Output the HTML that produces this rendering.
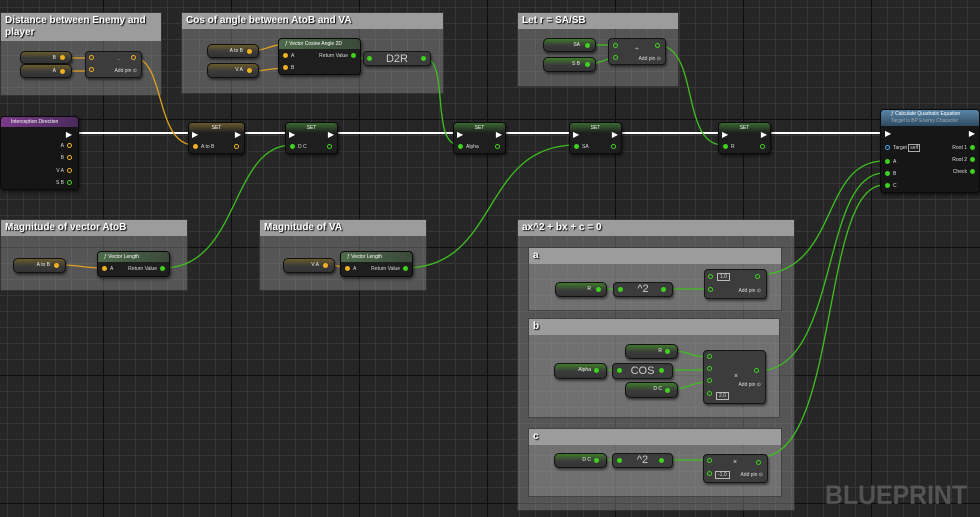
<!DOCTYPE html>
<html><head><meta charset="utf-8"><style>
*{margin:0;padding:0;box-sizing:border-box}
body{width:980px;height:517px;overflow:hidden;position:relative;font-family:"Liberation Sans",sans-serif;
background-color:#262626;
background-image:linear-gradient(#0e0e0e 1px,transparent 1px),linear-gradient(90deg,#0e0e0e 1px,transparent 1px),linear-gradient(#363636 1px,transparent 1px),linear-gradient(90deg,#363636 1px,transparent 1px);
background-size:128px 128px,128px 128px,16px 16px,16px 16px;background-position:-25px -9px,-25px -9px,-25px -9px,-25px -9px}
.c{position:absolute;background:rgba(150,150,150,.42);border:1px solid rgba(0,0,0,.4)}
.c>.t{background:#9c9c9c;color:#fff;font-size:10px;font-weight:bold;padding:2px 4px;line-height:12px;text-shadow:1px 1px 1px #000}
.n{position:absolute;background:#1e1e1e;border:1px solid #0a0a0a;border-radius:4px;box-shadow:1px 2px 3px rgba(0,0,0,.6);color:#ddd;font-size:5px}
.g{position:absolute;border-radius:5px;border:1px solid #111;box-shadow:1px 2px 2px rgba(0,0,0,.5);font-size:5px;color:#eee;text-align:right;padding-right:15px;line-height:12px}
.gy{background:linear-gradient(#6a5a2a,#3a3a3a 55%,#333)}
.gg{background:linear-gradient(#3f7a2a,#3a3a3a 55%,#333)}
.m{position:absolute;background:#3c3c3c;border:1px solid #151515;border-radius:4px;box-shadow:1px 2px 2px rgba(0,0,0,.5);color:#ddd;font-size:5px}
.d{position:absolute;width:5px;height:5px;border-radius:50%}
.y{background:#f0b020}.gr{background:#3fd020}
.o{border:1px solid #3fd020;background:transparent}.oy{border:1px solid #f0b020;background:transparent}
.h{position:absolute;left:0;right:0;top:0;height:10px;border-radius:3px 3px 0 0;font-size:5px;color:#fff;text-align:center;line-height:10px}
.big{position:absolute;font-size:11px;color:#ccc;text-align:center}
</style></head><body>

<div class="c" style="left:0;top:12px;width:162px;height:84px"><div class="t" style="height:28px">Distance between Enemy and player</div></div>
<div class="c" style="left:181px;top:12px;width:263px;height:82px"><div class="t">Cos of angle between AtoB and VA</div></div>
<div class="c" style="left:517px;top:12px;width:162px;height:75px"><div class="t">Let r = SA/SB</div></div>
<div class="c" style="left:0;top:219px;width:188px;height:72px"><div class="t">Magnitude of vector AtoB</div></div>
<div class="c" style="left:259px;top:219px;width:168px;height:72px"><div class="t">Magnitude of VA</div></div>
<div class="c" style="left:517px;top:219px;width:278px;height:292px"><div class="t">ax^2 + bx + c = 0</div></div>
<div class="c" style="left:528px;top:247px;width:254px;height:64px"><div class="t">a</div></div>
<div class="c" style="left:528px;top:318px;width:252px;height:100px"><div class="t">b</div></div>
<div class="c" style="left:528px;top:428px;width:254px;height:69px"><div class="t">c</div></div>

<svg width="980" height="517" style="position:absolute;left:0;top:0" fill="none">
<g stroke="#fff" stroke-width="2"><path d="M79 133H188M244 133H285M337 133H453M505 133H569M621 133H718M770 133H880M976 133H980"/></g>
<g stroke="#e0a020" stroke-width="1.3">
<path d="M62 58H91M62 71H91M134 58C165 58 155 145 194 145M252 51C265 51 270 44 290 44M252 71C265 71 270 68 290 68M60 265C80 265 85 268 102 268M330 265C340 265 340 268 346 268"/></g>
<g stroke="#3fc020" stroke-width="1.3">
<path d="M356 58H369M424 58C450 58 430 145 459 145M590 45H615M590 64C600 64 605 58 615 58M657 45C700 45 680 145 723 145M163 268C240 268 230 145 292 145M405 268C500 268 480 145 576 145M601 289H618M666 289H710M671 351C690 351 690 357 710 357M600 370H618M666 370H710M671 389C690 389 690 382 710 382M600 460H618M666 460H710M760 275C840 270 820 161 884 161M758 371C840 371 820 173 884 173M760 457C840 457 820 185 884 185M976 146H980M976 158H980M976 171H980"/></g>
</svg>

<div class="g gy" style="left:20px;top:51px;width:52px;height:13px">B</div><div class="d y" style="left:60px;top:55px"></div>
<div class="g gy" style="left:20px;top:64px;width:52px;height:14px">A</div><div class="d y" style="left:60px;top:69px"></div>
<div class="m" style="left:85px;top:51px;width:57px;height:27px"><div style="position:absolute;left:32px;top:5px">-</div><div style="position:absolute;right:4px;top:16px">Add pin ⊙</div></div>
<div class="d oy" style="left:89px;top:55px"></div><div class="d oy" style="left:89px;top:67px"></div><div class="d oy" style="left:131px;top:55px"></div>

<div class="g gy" style="left:207px;top:44px;width:52px;height:14px">A to B</div><div class="d y" style="left:247px;top:49px"></div>
<div class="g gy" style="left:207px;top:63px;width:52px;height:15px">V A</div><div class="d y" style="left:247px;top:68px"></div>
<div class="n" style="left:278px;top:38px;width:83px;height:37px"><div class="h" style="background:linear-gradient(90deg,#4d6b4a,#3a4a3a);text-align:left;padding-left:6px">ƒ Vector Cosine Angle 2D</div>
<div class="d y" style="left:4px;top:14px"></div><div style="position:absolute;left:12px;top:14px">A</div>
<div class="d y" style="left:4px;top:26px"></div><div style="position:absolute;left:12px;top:26px">B</div>
<div style="position:absolute;right:12px;top:14px">Return Value</div><div class="d gr" style="right:4px;top:14px"></div></div>
<div class="m" style="left:363px;top:51px;width:68px;height:15px"><div class="big" style="left:0;right:0;top:0;line-height:14px">D2R</div></div>
<div class="d gr" style="left:367px;top:56px"></div><div class="d gr" style="left:421px;top:56px"></div>

<div class="g gg" style="left:543px;top:38px;width:53px;height:14px">SA</div><div class="d gr" style="left:585px;top:43px"></div>
<div class="g gg" style="left:543px;top:57px;width:53px;height:15px">S B</div><div class="d gr" style="left:585px;top:62px"></div>
<div class="m" style="left:608px;top:38px;width:58px;height:27px"><div style="position:absolute;left:26px;top:7px;font-size:7px">÷</div><div style="position:absolute;right:4px;top:17px">Add pin ⊙</div></div>
<div class="d o" style="left:613px;top:43px"></div><div class="d o" style="left:613px;top:55px"></div><div class="d o" style="left:655px;top:43px"></div>

<div class="n" style="left:0px;top:116px;width:79px;height:74px;background:#151515"><div class="h" style="background:linear-gradient(90deg,#7a3a8a,#4a2a5a);text-align:left;padding-left:10px">Interception Direction</div>
<div style="position:absolute;right:6px;top:13px;color:#fff;font-size:8px">▶</div>
<div style="position:absolute;right:14px;top:26px">A</div><div class="d oy" style="right:6px;top:26px"></div>
<div style="position:absolute;right:14px;top:38px">B</div><div class="d oy" style="right:6px;top:38px"></div>
<div style="position:absolute;right:14px;top:51px">V A</div><div class="d oy" style="right:6px;top:51px"></div>
<div style="position:absolute;right:14px;top:63px">S B</div><div class="d o" style="right:6px;top:63px"></div></div>

<div class="n" style="left:188px;top:122px;width:57px;height:32px"><div class="h" style="background:linear-gradient(#6a5a30,#1e1e1e)">SET</div><div style="position:absolute;left:3px;top:7px;color:#fff;font-size:8px">▶</div><div style="position:absolute;right:3px;top:7px;color:#fff;font-size:8px">▶</div><div class="d y" style="left:4px;top:21px"></div><div style="position:absolute;left:12px;top:21px">A to B</div><div class="d oy" style="right:5px;top:21px"></div></div>
<div class="n" style="left:285px;top:122px;width:53px;height:32px"><div class="h" style="background:linear-gradient(#3a6a30,#1e1e1e)">SET</div><div style="position:absolute;left:3px;top:7px;color:#fff;font-size:8px">▶</div><div style="position:absolute;right:3px;top:7px;color:#fff;font-size:8px">▶</div><div class="d gr" style="left:4px;top:21px"></div><div style="position:absolute;left:12px;top:21px">D C</div><div class="d o" style="right:5px;top:21px"></div></div>
<div class="n" style="left:453px;top:122px;width:53px;height:32px"><div class="h" style="background:linear-gradient(#3a6a30,#1e1e1e)">SET</div><div style="position:absolute;left:3px;top:7px;color:#fff;font-size:8px">▶</div><div style="position:absolute;right:3px;top:7px;color:#fff;font-size:8px">▶</div><div class="d gr" style="left:4px;top:21px"></div><div style="position:absolute;left:12px;top:21px">Alpha</div><div class="d o" style="right:5px;top:21px"></div></div>
<div class="n" style="left:569px;top:122px;width:53px;height:32px"><div class="h" style="background:linear-gradient(#3a6a30,#1e1e1e)">SET</div><div style="position:absolute;left:3px;top:7px;color:#fff;font-size:8px">▶</div><div style="position:absolute;right:3px;top:7px;color:#fff;font-size:8px">▶</div><div class="d gr" style="left:4px;top:21px"></div><div style="position:absolute;left:12px;top:21px">SA</div><div class="d o" style="right:5px;top:21px"></div></div>
<div class="n" style="left:718px;top:122px;width:53px;height:32px"><div class="h" style="background:linear-gradient(#3a6a30,#1e1e1e)">SET</div><div style="position:absolute;left:3px;top:7px;color:#fff;font-size:8px">▶</div><div style="position:absolute;right:3px;top:7px;color:#fff;font-size:8px">▶</div><div class="d gr" style="left:4px;top:21px"></div><div style="position:absolute;left:12px;top:21px">R</div><div class="d o" style="right:5px;top:21px"></div></div>

<div class="n" style="left:880px;top:109px;width:100px;height:84px;background:#161616"><div class="h" style="height:16px;background:linear-gradient(#5a86a8,#2e4a60);text-align:left;padding-left:10px;line-height:7px;padding-top:1px">ƒ Calculate Quadratic Equation<br><span style="color:#9ab">Target is BP Enemy Character</span></div>
<div style="position:absolute;left:4px;top:19px;color:#fff;font-size:8px">▶</div><div style="position:absolute;right:4px;top:19px;color:#fff;font-size:8px">▶</div>
<div class="d" style="left:4px;top:35px;border:1px solid #4af"></div><div style="position:absolute;left:12px;top:35px">Target <span style="border:1px solid #aaa;padding:0 1px">self</span></div>
<div class="d gr" style="left:4px;top:49px"></div><div style="position:absolute;left:12px;top:49px">A</div>
<div class="d gr" style="left:4px;top:61px"></div><div style="position:absolute;left:12px;top:61px">B</div>
<div class="d gr" style="left:4px;top:73px"></div><div style="position:absolute;left:12px;top:73px">C</div>
<div style="position:absolute;right:12px;top:35px">Root 1</div><div class="d gr" style="right:4px;top:35px"></div>
<div style="position:absolute;right:12px;top:47px">Root 2</div><div class="d gr" style="right:4px;top:47px"></div>
<div style="position:absolute;right:12px;top:59px">Check</div><div class="d gr" style="right:4px;top:59px"></div></div>

<div class="g gy" style="left:13px;top:258px;width:53px;height:15px">A to B</div><div class="d y" style="left:54px;top:263px"></div>
<div class="n" style="left:97px;top:251px;width:73px;height:26px"><div class="h" style="background:linear-gradient(90deg,#4d6b4a,#3a4a3a);text-align:left;padding-left:6px">ƒ Vector Length</div><div class="d y" style="left:4px;top:14px"></div><div style="position:absolute;left:12px;top:14px">A</div><div style="position:absolute;right:12px;top:14px">Return Value</div><div class="d gr" style="right:4px;top:14px"></div></div>
<div class="g gy" style="left:283px;top:258px;width:52px;height:15px">V A</div><div class="d y" style="left:323px;top:263px"></div>
<div class="n" style="left:340px;top:251px;width:73px;height:26px"><div class="h" style="background:linear-gradient(90deg,#4d6b4a,#3a4a3a);text-align:left;padding-left:6px">ƒ Vector Length</div><div class="d y" style="left:4px;top:14px"></div><div style="position:absolute;left:12px;top:14px">A</div><div style="position:absolute;right:12px;top:14px">Return Value</div><div class="d gr" style="right:4px;top:14px"></div></div>

<div class="g gg" style="left:555px;top:282px;width:52px;height:15px">R</div><div class="d gr" style="left:596px;top:287px"></div>
<div class="m" style="left:613px;top:282px;width:60px;height:15px"><div class="big" style="left:0;right:0;top:0;line-height:13px">^2</div></div><div class="d gr" style="left:618px;top:287px"></div><div class="d gr" style="left:661px;top:287px"></div>
<div class="m" style="left:704px;top:269px;width:63px;height:30px"><div style="position:absolute;left:12px;top:3px;border:1px solid #bbb;padding:0 2px">1.0</div><div style="position:absolute;right:5px;top:18px">Add pin ⊙</div></div>
<div class="d o" style="left:708px;top:274px"></div><div class="d o" style="left:708px;top:287px"></div><div class="d o" style="left:755px;top:274px"></div>

<div class="g gg" style="left:625px;top:344px;width:53px;height:15px">R</div><div class="d gr" style="left:665px;top:349px"></div>
<div class="g gg" style="left:554px;top:363px;width:53px;height:16px">Alpha</div><div class="d gr" style="left:594px;top:368px"></div>
<div class="m" style="left:612px;top:363px;width:61px;height:16px"><div class="big" style="left:0;right:0;top:0;line-height:14px">COS</div></div><div class="d gr" style="left:617px;top:368px"></div><div class="d gr" style="left:659px;top:368px"></div>
<div class="g gg" style="left:625px;top:382px;width:53px;height:16px">D C</div><div class="d gr" style="left:665px;top:388px"></div>
<div class="m" style="left:703px;top:350px;width:63px;height:54px"><div style="position:absolute;left:30px;top:22px;font-size:7px">×</div><div style="position:absolute;right:4px;top:31px">Add pin ⊙</div><div style="position:absolute;left:12px;top:41px;border:1px solid #bbb;padding:0 2px">2.0</div></div>
<div class="d o" style="left:707px;top:354px"></div><div class="d o" style="left:707px;top:366px"></div><div class="d o" style="left:707px;top:378px"></div><div class="d o" style="left:707px;top:391px"></div><div class="d o" style="left:754px;top:368px"></div>

<div class="g gg" style="left:554px;top:453px;width:53px;height:15px">D C</div><div class="d gr" style="left:594px;top:458px"></div>
<div class="m" style="left:612px;top:453px;width:61px;height:15px"><div class="big" style="left:0;right:0;top:0;line-height:13px">^2</div></div><div class="d gr" style="left:617px;top:458px"></div><div class="d gr" style="left:659px;top:458px"></div>
<div class="m" style="left:703px;top:454px;width:65px;height:29px"><div style="position:absolute;left:29px;top:4px;font-size:7px">×</div><div style="position:absolute;left:11px;top:16px;border:1px solid #bbb;padding:0 2px">-1.0</div><div style="position:absolute;right:4px;top:17px">Add pin ⊙</div></div>
<div class="d o" style="left:707px;top:458px"></div><div class="d o" style="left:707px;top:471px"></div><div class="d o" style="left:756px;top:460px"></div>

<div style="position:absolute;left:825px;top:480px;font-size:27px;font-weight:bold;color:rgba(120,120,120,.55);transform:scaleX(0.92);transform-origin:left top">BLUEPRINT</div>
</body></html>
